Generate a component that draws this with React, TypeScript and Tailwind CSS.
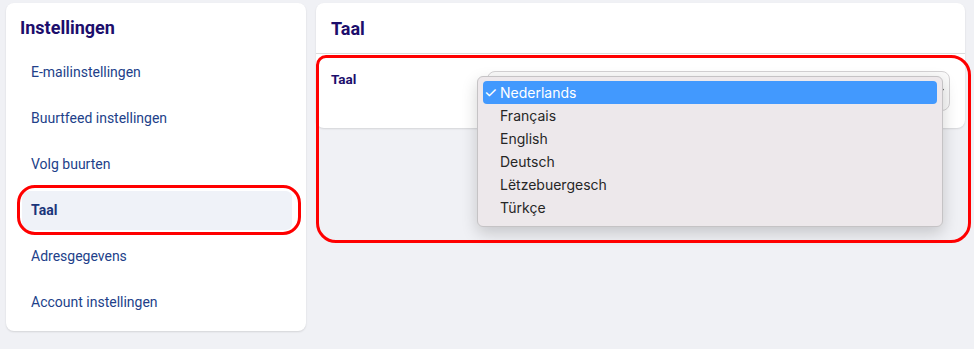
import { ChevronDown } from 'lucide-react';

const menuItems = [
    { label: 'E-mailinstellingen' },
    { label: 'Buurtfeed instellingen' },
    { label: 'Volg buurten' },
    { label: 'Taal', active: true },
    { label: 'Adresgegevens' },
    { label: 'Account instellingen' },
];

const languages = ['Nederlands', 'Français', 'English', 'Deutsch', 'Lëtzebuergesch', 'Türkçe'];

export default function App() {
    return (
        <div className="flex h-[349px] gap-[10px] bg-[#f0f1f5] pt-[3px] pr-[9px] pl-[6px] font-['Roboto',sans-serif]">
            <aside className="relative h-[328px] w-[300px] shrink-0 rounded-lg bg-white shadow-[0_1px_2px_rgba(0,0,0,0.12)]">
                <h1 className="px-[14px] pt-[15px] text-[18px] leading-5 font-bold text-[#1c0e6c]">Instellingen</h1>
                <nav className="mt-[15px] flex flex-col gap-[7px] pr-[14px] pl-[16px]">
                    {menuItems.map((item) => (
                        <a
                            key={item.label}
                            className={`flex h-[39px] items-center rounded-md px-[9px] text-[14px] ${
                                item.active ? 'bg-[#eff2f8] font-bold text-[#1a357a]' : 'text-[#223f8a]'
                            }`}
                        >
                            {item.label}
                        </a>
                    ))}
                </nav>
                <div className="pointer-events-none absolute top-[182px] left-[11px] h-[50px] w-[284px] rounded-[18px] border-[3px] border-[#ff0000]" />
            </aside>

            <main className="relative h-[125px] flex-1 rounded-lg bg-white shadow-[0_1px_2px_rgba(0,0,0,0.12)]">
                <div className="flex h-[51px] items-center border-b border-[#dcdcdc] px-[15px]">
                    <h2 className="text-[18px] font-bold text-[#1c0e6c]">Taal</h2>
                </div>
                <div className="flex px-[15px] pt-[17px]">
                    <label className="w-[156px] shrink-0 text-[13.5px] leading-4 font-bold text-[#1c0e6c]">Taal</label>
                    <div className="relative flex h-[40px] flex-1 items-center justify-end rounded-lg border border-[#d4d2d4] bg-[#fafafa] px-[3px]">
                        <ChevronDown size={12} strokeWidth={3} className="text-[#333]" />
                    </div>
                </div>

                <div className="absolute top-[73px] left-[161px] w-[466px] rounded-md border border-[#c5c3c5] bg-[#ede8eb] px-[5px] pt-[4px] pb-[7px] font-['Inter',sans-serif] text-[14px] text-[#262626] shadow-[0_6px_16px_rgba(0,0,0,0.18)]">
                    {languages.map((lang, i) => (
                        <div
                            key={lang}
                            className={`flex h-[23px] items-center rounded-[4px] ${i === 0 ? 'bg-[#4299fe] text-white' : ''}`}
                        >
                            <span className="w-[17px] pl-[1px] text-[15px] leading-none">{i === 0 ? '✓' : ''}</span>
                            <span>{lang}</span>
                        </div>
                    ))}
                </div>

                <div className="pointer-events-none absolute top-[52px] left-0 h-[188px] w-[655px] rounded-[20px] rounded-tl-[10px] border-[3px] border-[#ff0000]" />
            </main>
        </div>
    );
}
